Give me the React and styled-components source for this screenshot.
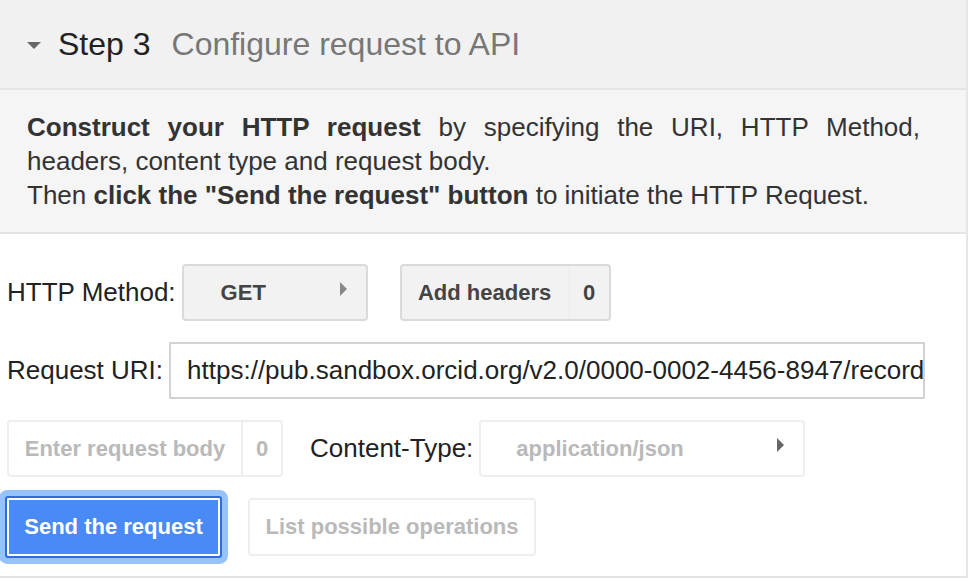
import React from "react";
import styled, { createGlobalStyle } from "styled-components";

const Global = createGlobalStyle`
  html, body { margin: 0; padding: 0; background: #fff; }
  body { font-family: "Liberation Sans", Arial, sans-serif; }
`;

const Panel = styled.div`
  width: 968px;
  box-sizing: border-box;
  border-right: 2px solid #e6e6e6;
`;

const Header = styled.div`
  height: 90px;
  box-sizing: border-box;
  display: flex;
  align-items: center;
  padding-left: 27px;
  background: #f1f1f1;
  border-bottom: 2px solid #e4e4e4;
  font-size: 32px;
`;

const Caret = styled.span`
  width: 0;
  height: 0;
  border-left: 7px solid transparent;
  border-right: 7px solid transparent;
  border-top: 7px solid #666;
  margin-right: 17px;
  margin-top: 2px;
`;

const StepNo = styled.span`
  color: #222;
`;

const StepTitle = styled.span`
  color: #777;
  margin-left: 21px;
`;

const Description = styled.div`
  background: #f5f5f5;
  border-bottom: 2px solid #e4e4e4;
  padding: 20px 46px 20px 27px;
  font-size: 26px;
  line-height: 34px;
  color: #333;
  text-align: justify;
`;

const Body = styled.div`
  display: flex;
  flex-direction: column;
  gap: 21px;
  padding: 30px 0 20px 7px;
  border-bottom: 2px solid #e4e4e4;
`;

const Row = styled.div`
  display: flex;
  align-items: center;
  height: ${p => p.$h || 57}px;
`;

const Label = styled.span`
  font-size: 26px;
  color: #222;
  margin-right: 6px;
  margin-left: ${p => p.$ml || 0}px;
`;

const Group = styled.div`
  display: flex;
  height: 57px;
  box-sizing: border-box;
  border: 2px solid ${p => (p.$off ? "#eeeeee" : "#dadada")};
  border-radius: 4px;
  background: ${p => (p.$off ? "#fff" : "#f2f2f2")};
  color: ${p => (p.$off ? "#b9b9b9" : "#444")};
  font-size: 22px;
  font-weight: bold;
  margin-left: ${p => p.$ml || 0}px;
`;

const Seg = styled.div`
  display: flex;
  align-items: center;
  justify-content: center;
  width: ${p => p.$w}px;
  & + & {
    border-left: 2px solid ${p => (p.$off ? "#eeeeee" : "#dadada")};
  }
`;

const Select = styled.div`
  display: flex;
  align-items: center;
  width: ${p => p.$w}px;
  height: 57px;
  box-sizing: border-box;
  padding: 0 19px 0 ${p => p.$pl}px;
  border: 2px solid ${p => (p.$off ? "#eeeeee" : "#dadada")};
  border-radius: 4px;
  background: ${p => (p.$off ? "#fff" : "#f2f2f2")};
  color: ${p => (p.$off ? "#b9b9b9" : "#444")};
  font-size: 22px;
  font-weight: bold;
`;

const Arrow = styled.span`
  margin-left: auto;
  width: 0;
  height: 0;
  border-top: 7px solid transparent;
  border-bottom: 7px solid transparent;
  border-left: 7px solid ${p => (p.$off ? "#666" : "#888")};
  margin-top: -8px;
`;

const UriInput = styled.input`
  width: 756px;
  height: 57px;
  box-sizing: border-box;
  border: 2px solid #d2d2d2;
  border-radius: 1px;
  padding: 0 0 0 16px;
  font-family: "Liberation Sans", Arial, sans-serif;
  font-size: 26px;
  color: #222;
  outline: none;
  background: #fff;
`;

const SendButton = styled.button`
  width: 217px;
  height: 62px;
  margin-left: -2px;
  box-sizing: border-box;
  border: 2px solid #2c6de0;
  border-radius: 3px;
  background: #4a8af4;
  box-shadow: inset 0 0 0 2px #fff, 0 0 0 6px #96c3fb;
  color: #fff;
  font-family: "Liberation Sans", Arial, sans-serif;
  font-size: 22px;
  font-weight: bold;
  padding: 0;
`;

const PlainButton = styled.div`
  display: flex;
  align-items: center;
  justify-content: center;
  width: 288px;
  height: 58px;
  box-sizing: border-box;
  margin-left: 26px;
  border: 2px solid #eeeeee;
  border-radius: 4px;
  color: #b9b9b9;
  font-size: 22px;
  font-weight: bold;
`;

export default function App() {
  return (
    <>
      <Global />
      <Panel>
        <Header>
          <Caret />
          <StepNo>Step 3</StepNo>
          <StepTitle>Configure request to API</StepTitle>
        </Header>
        <Description>
          <b>Construct your HTTP request</b> by specifying the URI, HTTP Method,
          headers, content type and request body.
          <br />
          Then <b>click the "Send the request" button</b> to initiate the HTTP
          Request.
        </Description>
        <Body>
          <Row>
            <Label>HTTP Method:</Label>
            <Select $w={186} $pl={37}>
              GET
              <Arrow />
            </Select>
            <Group $ml={32}>
              <Seg $w={166}>Add headers</Seg>
              <Seg $w={39}>0</Seg>
            </Group>
          </Row>
          <Row>
            <Label>Request URI:</Label>
            <UriInput
              readOnly
              value="https://pub.sandbox.orcid.org/v2.0/0000-0002-4456-8947/record"
            />
          </Row>
          <Row>
            <Group $off>
              <Seg $off $w={232}>Enter request body</Seg>
              <Seg $off $w={38}>0</Seg>
            </Group>
            <Label $ml={27}>Content-Type:</Label>
            <Select $off $w={326} $pl={35}>
              application/json
              <Arrow $off />
            </Select>
          </Row>
          <Row $h={58}>
            <SendButton>Send the request</SendButton>
            <PlainButton>List possible operations</PlainButton>
          </Row>
        </Body>
      </Panel>
    </>
  );
}
